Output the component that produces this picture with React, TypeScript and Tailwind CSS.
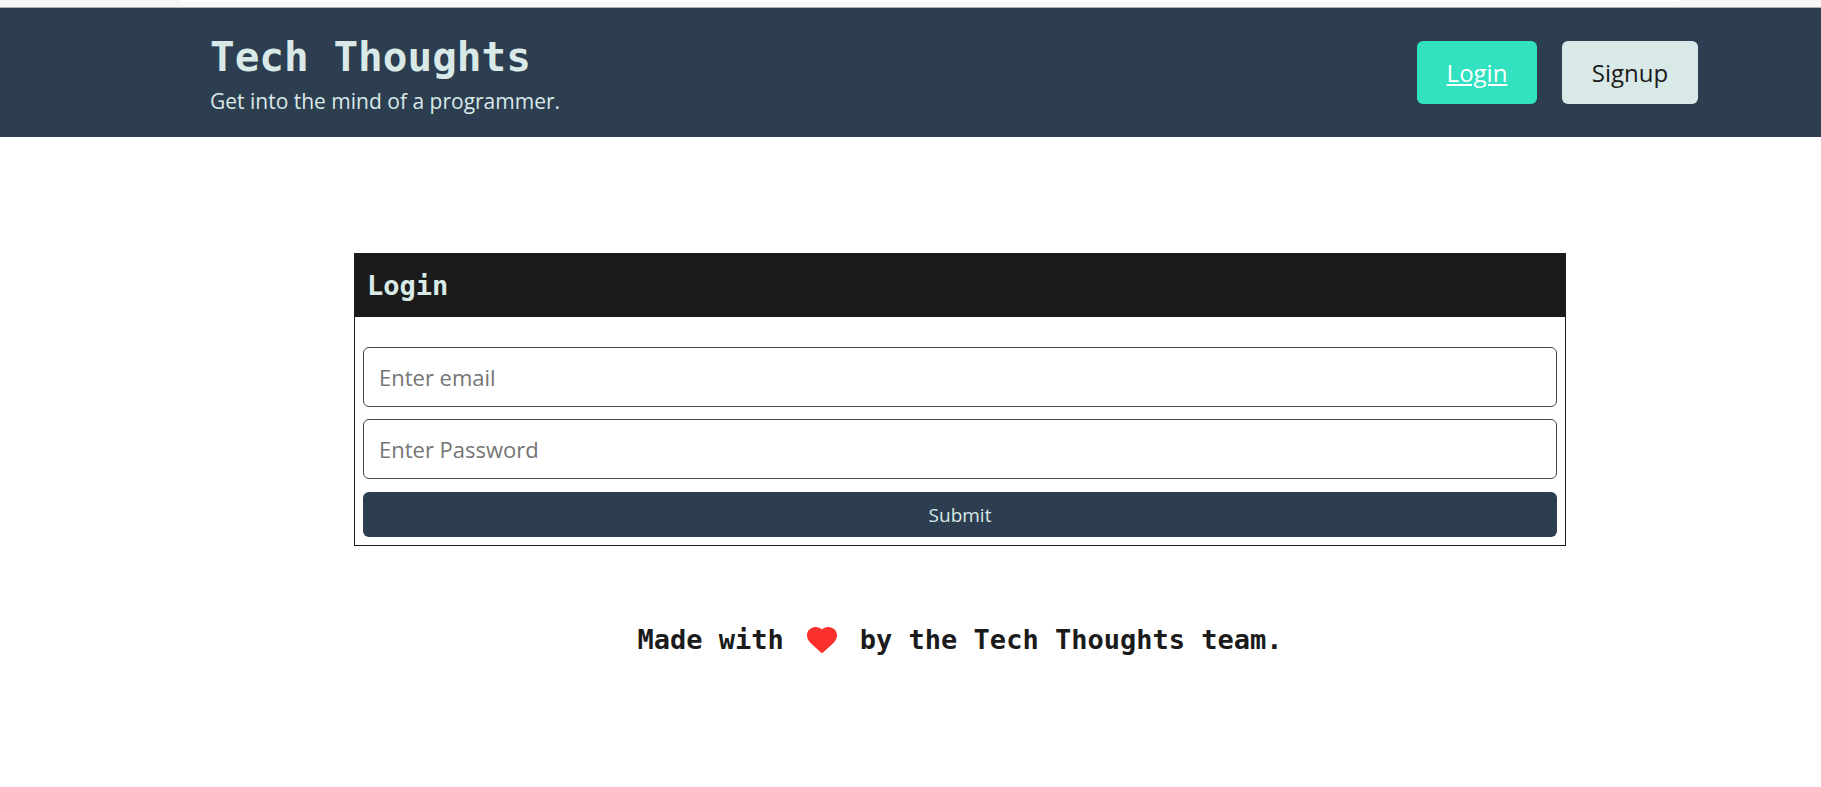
function Heart() {
  return (
    <svg viewBox="0 0 30 26" className="mx-[23px] h-[26px] w-[30px] fill-[#fb302d]" role="img" aria-label="love">
      <path d="M15 2.6C13.5 1 11.2 0 8.6 0 3.7 0 0 3.6 0 8.3c0 3 1.3 5.400 3.600 7.700L13.900 25.500c.6.600 1.600.6 2.200 0L26.400 16C28.700 13.700 30 11.300 30 8.300 30 3.600 26.300 0 21.400 0 18.800 0 16.500 1 15 2.600Z" />
    </svg>
  );
}

export default function App() {
  return (
    <div className="min-h-screen bg-white font-['Open_Sans',sans-serif] text-[#1b1b1b]">
      <div className="h-2 border-b border-[#b5b0b0] bg-[#f7f7f7] pr-[141px] pl-[181px]">
        <div className="h-0.5 rounded-b-md bg-white" />
      </div>

      <header className="flex items-start justify-between bg-[#2d3e50] pt-[25px] pr-[123px] pb-4 pl-[210px] text-[#d9e9e7]">
        <div>
          <h1 className="font-['DejaVu_Sans_Mono',monospace] text-[41px] leading-[48px] font-bold">
            Tech Thoughts
          </h1>
          <p className="text-[21px] leading-[40px]">Get into the mind of a programmer.</p>
        </div>
        <nav className="flex gap-[25px] pt-2 text-[24px]">
          <a
            href="#login"
            className="flex h-[63px] w-[120px] items-center justify-center rounded-md bg-[#31e1bf] text-white underline"
          >
            Login
          </a>
          <a
            href="#signup"
            className="flex h-[63px] w-[136px] items-center justify-center rounded-md bg-[#d9e9e7] text-[#1b1b1b]"
          >
            Signup
          </a>
        </nav>
      </header>

      <main className="pt-[116px] pl-[99px]">
        <section className="mx-auto max-w-[1212px] border border-[#1b1b1b]">
          <h2 className="bg-[#1b1b1b] px-3 font-['DejaVu_Sans_Mono',monospace] text-[27px] leading-[63px] font-bold text-[#d9e9e7]">
            Login
          </h2>
          <form className="flex flex-col px-2 pt-[30px] pb-2">
            <input
              type="email"
              aria-label="Email"
              placeholder="Enter email"
              className="mb-3 h-[60px] w-full rounded-md border border-[#4a4a4a] px-[15px] text-[22px] placeholder:text-[#757575]"
            />
            <input
              type="password"
              aria-label="Password"
              placeholder="Enter Password"
              className="mb-[13px] h-[60px] w-full rounded-md border border-[#4a4a4a] px-[15px] text-[22px] placeholder:text-[#757575]"
            />
            <button
              type="submit"
              className="h-[45px] w-full rounded-md bg-[#2d3e50] pt-0.5 text-[19px] text-[#d9e9e7]"
            >
              Submit
            </button>
          </form>
        </section>
      </main>

      <footer className="flex items-center justify-center pt-[74px] pl-[99px] font-['DejaVu_Sans_Mono',monospace] text-[27px] leading-[40px] font-bold">
        <span>Made with</span>
        <Heart />
        <span>by the Tech Thoughts team.</span>
      </footer>
    </div>
  );
}
